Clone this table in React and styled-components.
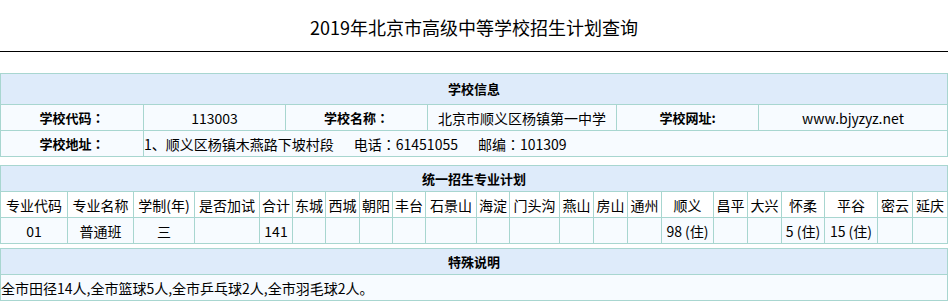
import styled, { createGlobalStyle } from 'styled-components'

const GlobalStyle = createGlobalStyle`
  body {
    margin: 0;
    background: #fff;
    font-family: "Noto Sans CJK SC", "Noto Sans", sans-serif;
    color: #000;
  }
`

const Page = styled.div`
  width: 948px;
`

const Title = styled.h1`
  margin: 0;
  height: 52px;
  border-bottom: 1px solid #000;
  display: flex;
  align-items: center;
  justify-content: center;
  font-size: 18px;
  font-weight: normal;
  padding-top: 2px;
  box-sizing: border-box;
`

const Table = styled.table`
  width: 948px;
  border-collapse: collapse;
  table-layout: fixed;
  margin-top: ${({ $gap }) => $gap}px;
  font-size: 14px;

  td,
  th {
    border: 1px solid #a8d6d0;
    padding: 0;
    line-height: 18px;
    white-space: nowrap;
    overflow: hidden;
  }
`

const HeadCell = styled.th`
  background: #deebfa;
  font-size: 13px;
  font-weight: bold;
  height: ${({ $h }) => $h || 25}px;
  text-align: center;
`

const Cell = styled.td`
  background: ${({ $white }) => ($white ? '#fff' : '#f7fbff')};
  height: 25px;
  text-align: ${({ $left }) => ($left ? 'left' : 'center')};
  padding-left: ${({ $left }) => ($left ? '1px' : '0')};
  font-weight: ${({ $bold }) => ($bold ? 'bold' : 'normal')};
  font-size: ${({ $bold }) => ($bold ? '13px' : '14px')};
`

// full-width colon centred in its box, as the original font draws it
const Colon = styled.span`
  font-family: "Noto Sans CJK TC", "Noto Sans CJK SC", sans-serif;
`

const Gap = styled.span`
  display: inline-block;
  width: 20px;
`

const infoCols = [143, 142, 142, 189, 142, 189]
const planCols = [67, 66, 61, 65, 33, 33, 34, 33, 33, 51, 33, 50, 34, 34, 34, 52, 34, 34, 43, 53, 35, 35]

const planHeads = [
  '专业代码', '专业名称', '学制(年)', '是否加试', '合计', '东城', '西城', '朝阳', '丰台', '石景山',
  '海淀', '门头沟', '燕山', '房山', '通州', '顺义', '昌平', '大兴', '怀柔', '平谷', '密云', '延庆',
]

const planRow = [
  '01', '普通班', '三', '', '141', '', '', '', '', '', '', '', '', '', '',
  '98 (住)', '', '', '5 (住)', '15 (住)', '', '',
]

const App = () => (
  <Page>
    <GlobalStyle />
    <Title>2019年北京市高级中等学校招生计划查询</Title>

    <Table $gap={21}>
      <colgroup>
        {infoCols.map((w, i) => (
          <col key={i} style={{ width: w }} />
        ))}
      </colgroup>
      <tbody>
        <tr>
          <HeadCell colSpan={6} $h={30}>学校信息</HeadCell>
        </tr>
        <tr>
          <Cell $bold>学校代码<Colon>：</Colon></Cell>
          <Cell>113003</Cell>
          <Cell $bold>学校名称<Colon>：</Colon></Cell>
          <Cell>北京市顺义区杨镇第一中学</Cell>
          <Cell $bold>学校网址:</Cell>
          <Cell>www.bjyzyz.net</Cell>
        </tr>
        <tr>
          <Cell $bold>学校地址<Colon>：</Colon></Cell>
          <Cell colSpan={5} $left>
            1、顺义区杨镇木燕路下坡村段<Gap />电话<Colon>：</Colon>61451055<Gap />邮编<Colon>：</Colon>101309
          </Cell>
        </tr>
      </tbody>
    </Table>

    <Table $gap={8}>
      <colgroup>
        {planCols.map((w, i) => (
          <col key={i} style={{ width: w }} />
        ))}
      </colgroup>
      <tbody>
        <tr>
          <HeadCell colSpan={22}>统一招生专业计划</HeadCell>
        </tr>
        <tr>
          {planHeads.map((h) => (
            <Cell key={h} $white>{h}</Cell>
          ))}
        </tr>
        <tr>
          {planRow.map((v, i) => (
            <Cell key={i}>{v}</Cell>
          ))}
        </tr>
      </tbody>
    </Table>

    <Table $gap={4}>
      <tbody>
        <tr>
          <HeadCell>特殊说明</HeadCell>
        </tr>
        <tr>
          <Cell $left>全市田径14人,全市篮球5人,全市乒乓球2人,全市羽毛球2人。</Cell>
        </tr>
      </tbody>
    </Table>
  </Page>
)

export default App
